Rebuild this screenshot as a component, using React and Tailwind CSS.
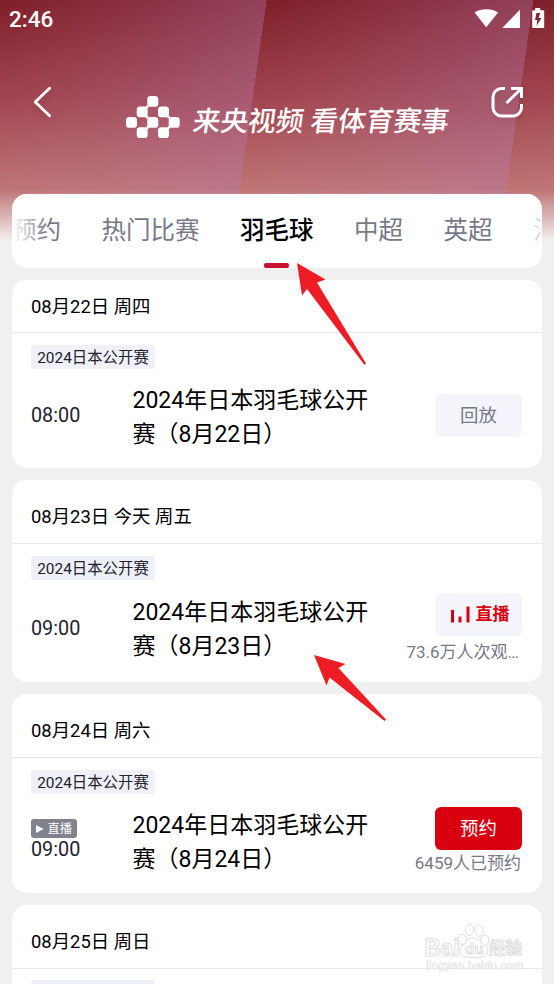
import React from "react";

const tabs = [
  { name: "预约" },
  { name: "热门比赛" },
  { name: "羽毛球", active: true },
  { name: "中超" },
  { name: "英超" },
  { name: "法甲" },
];

const days = [
  {
    date: "08月22日 周四",
    time: "08:00",
    title: "2024年日本羽毛球公开赛（8月22日）",
    status: "replay",
    cardClass: "h-[188px]",
    headClass: "h-[53px] pt-[2px]",
    bodyClass: "pt-[12px]",
    timeClass: "mt-[35.5px]",
    titleClass: "mt-[15px]",
    actionClass: "mt-[25px]",
  },
  {
    date: "08月23日 今天 周五",
    time: "09:00",
    title: "2024年日本羽毛球公开赛（8月23日）",
    status: "live",
    note: "73.6万人次观…",
    noteClass: "mt-[3px] pr-[3px]",
    cardClass: "h-[202px]",
    headClass: "h-[64px] pt-[11px]",
    bodyClass: "pt-[12px]",
    timeClass: "mt-[36.5px]",
    titleClass: "mt-[16px]",
    actionClass: "mt-[13px]",
  },
  {
    date: "08月24日 周六",
    time: "09:00",
    title: "2024年日本羽毛球公开赛（8月24日）",
    status: "book",
    note: "6459人已预约",
    noteClass: "pr-px",
    badge: true,
    cardClass: "h-[198.5px]",
    headClass: "h-[63.5px] pt-[11px]",
    bodyClass: "pt-[12px]",
    timeClass: "mt-[25.5px]",
    titleClass: "mt-[15px]",
    actionClass: "mt-[13px]",
  },
  {
    date: "08月25日 周日",
    time: "09:00",
    title: "2024年日本羽毛球公开赛（8月25日）",
    status: "book",
    cardClass: "h-[198px]",
    headClass: "h-[64px] pt-[10px]",
    bodyClass: "pt-[11px]",
    timeClass: "mt-[35px]",
    titleClass: "mt-[14px]",
    actionClass: "mt-[13px]",
  },
];

const StatusBar = () => (
  <div className="flex h-[38px] items-center justify-between pl-[9px] pr-[9px]">
    <span className="text-[22.5px] font-medium leading-none text-white">2:46</span>
    <svg width="71" height="22" viewBox="0 0 71 22" fill="white">
      <path d="M.6 4.600C7 .2 17.600.2 24 4.600L12.300 19.200Z" />
      <path d="M46 1.800V20H28.200Z" />
      <path d="M58.200 2.200h3V0h5v2.200h3a1 1 0 0 1 1 1V19a1 1 0 0 1-1 1H59.200a1 1 0 0 1-1-1V3.200a1 1 0 0 1 1-1ZM62.500 5l-1.500 7h2.300l-.8 6 5-8h-2.900l1.600-5Z" fillRule="evenodd" />
    </svg>
  </div>
);

const BrandMark = () => (
  <svg width="54" height="43" viewBox="0 0 54 43" fill="white">
    <rect x="21.300" y="0" width="11" height="10.800" rx="3.400" />
    <rect x="10.700" y="10.500" width="11" height="10.800" rx="3.400" />
    <rect x="32" y="10.500" width="11" height="10.800" rx="3.400" />
    <rect x="0" y="21" width="11" height="10.800" rx="3.400" />
    <rect x="21.300" y="21" width="11" height="10.800" rx="3.400" />
    <rect x="42.700" y="21" width="11" height="10.800" rx="3.400" />
    <rect x="10.700" y="31.300" width="11" height="10.800" rx="3.400" />
    <rect x="32" y="31.300" width="11" height="10.800" rx="3.400" />
    <path d="M20 9.500h2.500v2.500h-2.500zM20 20h2.500v2.500h-2.500zM41.500 20h2.500v2.500h-2.500zM20.300 30.300h2.500v2.500h-2.500zM41.500 30.300h2.500v2.500h-2.500z" />
  </svg>
);

const Banner = () => (
  <div className="flex h-[156px] items-start pl-[32px]">
    <svg className="mt-[48px] drop-shadow-md" width="22" height="32" viewBox="0 0 22 32" fill="none" stroke="white" strokeWidth="2.800" strokeLinecap="round" strokeLinejoin="round">
      <path d="M17.600 2.200 3.200 16l14.400 13.800" />
    </svg>
    <div className="ml-[72px] mt-[58px]">
      <BrandMark />
    </div>
    <h1 className="ml-[13px] mt-[67px] w-[284px] -skew-x-8 whitespace-nowrap text-[27.700px] font-medium leading-[34px] text-white">
      来央视频 看体育赛事
    </h1>
    <svg className="ml-[13px] mt-[48px] drop-shadow-md" width="34" height="32" viewBox="0 0 34 32" fill="none" stroke="white" strokeWidth="3">
      <path d="M15 2.500H11.500A8.500 8.500 0 0 0 3 11V21.500a8.500 8.500 0 0 0 8.500 8.500H23a8.500 8.500 0 0 0 8.500-8.500V18M21 2.500h10.500V12M31.500 2.500 16.500 17" />
    </svg>
  </div>
);

const Tabs = () => (
  <nav className="relative flex h-[73.500px] justify-start overflow-hidden rounded-[15px] bg-white">
    <div className="flex shrink-0 gap-[40.500px]">
      {tabs.map((tab) => (
        <div
          key={tab.name}
          className={
            tab.active
              ? "flex shrink-0 flex-col items-center text-[24.500px] font-medium text-black"
              : "flex shrink-0 flex-col items-center text-[24.500px] text-[#767988]"
          }
        >
          <span className="mt-[19px] leading-[36px]">{tab.name}</span>
          {tab.active && <span className="mt-[14px] h-[4.500px] w-[25px] rounded-[2px] bg-[#c8102e]" />}
        </div>
      ))}
    </div>
    <span className="absolute left-0 top-0 h-[60px] w-[36px] bg-linear-to-r from-white to-transparent" />
    <span className="absolute right-0 top-0 h-[60px] w-[20px] bg-white/75" />
  </nav>
);

const LiveBars = () => (
  <svg className="-mt-[2px]" width="19" height="17" viewBox="0 0 19 17" fill="#d9000f">
    <path d="M0 4h3v12.500H0zM7.500 10.500h3v6h-3zM15.500 0.500h3v16h-3z" />
  </svg>
);

const Action = ({ status }) => {
  if (status === "live") {
    return (
      <button className="flex h-[43px] w-[87px] items-center justify-center gap-[6px] rounded-[6px] bg-[#f4f5fa] pl-[3px] pt-px text-[17px] font-bold text-[#d9000f]">
        <LiveBars />
        直播
      </button>
    );
  }
  if (status === "book") {
    return (
      <button className="h-[43px] w-[87px] rounded-[6px] bg-[#d9000f] text-[18.400px] text-white">预约</button>
    );
  }
  return (
    <button className="h-[43px] w-[87px] rounded-[6px] bg-[#f4f5fa] pt-[2px] text-[18.400px] text-[#767988]">回放</button>
  );
};

const DayCard = ({ day }) => (
  <section className={`${day.cardClass} shrink-0 overflow-hidden rounded-[15px] bg-white`}>
    <header className={`${day.headClass} flex items-center border-b border-[#e6e6e6] pl-[19px] text-[18.400px] text-black`}>
      {day.date}
    </header>
    <div className={`${day.bodyClass} pl-[19px] pr-[20px]`}>
      <span className="flex h-[24px] w-[124px] items-center justify-center rounded-[3px] bg-[#eff1f7] pt-[3px] text-[15.400px] text-[#22222e]">
        2024日本公开赛
      </span>
      <div className="flex items-start">
        <div className={`${day.timeClass} w-[101.500px] text-[#22222e]`}>
          {day.badge && (
            <span className="flex h-[19px] w-[46px] items-center gap-[4px] rounded-[3px] bg-[#80838e] pl-[5px] pt-px text-[12.200px] text-white">
              <svg width="7.500" height="8" viewBox="0 0 7.500 8" fill="white">
                <path d="M0 0 7.500 4 0 8Z" />
              </svg>
              直播
            </span>
          )}
          <p className="text-[19.800px] leading-[24px]">{day.time}</p>
        </div>
        <h2 className={`${day.titleClass} w-[240px] text-[23px] leading-[34px] text-black`}>{day.title}</h2>
        <div className={`${day.actionClass} ml-auto flex flex-col items-end`}>
          <Action status={day.status} />
          {day.note && (
            <p className={`${day.noteClass} whitespace-nowrap text-[17px] leading-[27px] text-[#767988]`}>{day.note}</p>
          )}
        </div>
      </div>
    </div>
  </section>
);

const Arrows = () => (
  <svg className="pointer-events-none absolute left-0 top-0" width="554" height="984" viewBox="0 0 554 984" fill="#ee1c25">
    <path d="M297 263 325.500 279.500 317 282.500 366 363.500 364.500 365 307 289 302 295.500Z" />
    <path d="M314 655 345.500 664 338.500 668 386 719.500 384.500 721 329.500 677.500 326.500 685.500Z" />
  </svg>
);

const Watermark = () => (
  <svg className="pointer-events-none absolute left-[420px] top-[918px]" width="110" height="60" viewBox="0 0 110 60" fill="white" stroke="#dedede" strokeWidth="1">
    <text x="4.500" y="37.500" fontSize="23" fontFamily="Liberation Sans" fontWeight="bold" textLength="35" lengthAdjust="spacingAndGlyphs">Bai</text>
    <ellipse cx="42.500" cy="21.500" rx="4.200" ry="5.200" transform="rotate(-15 42.500 21.500)" />
    <ellipse cx="49.500" cy="12" rx="4" ry="5.800" />
    <ellipse cx="59" cy="12.500" rx="4" ry="5.800" />
    <ellipse cx="64.500" cy="22.500" rx="4.200" ry="5.500" transform="rotate(15 64.500 22.500)" />
    <path d="M53 20c-5 0-6 3-9 6.500-6 4-6 12 1 12.500 4 .5 13 .5 18 0 6-.5 6-8 1-12.500-4-3.500-6-6.500-11-6.500Z" />
    <text x="45" y="35.500" fontSize="15" fontFamily="Liberation Sans" fontWeight="bold">du</text>
    <text x="69" y="36" fontSize="16.500" fontFamily="Noto Sans CJK SC" fontWeight="bold">经验</text>
    <text x="6" y="51" fontSize="11.500" fontFamily="Liberation Sans" stroke="#e6e6e6" strokeWidth=".7" textLength="97">jingyan.baidu.com</text>
  </svg>
);

export default function App() {
  return (
    <div className="relative h-[984px] w-[554px] overflow-hidden bg-[#f0f0f0] font-[Roboto,'Noto_Sans_CJK_SC',sans-serif]">
      <div className="absolute left-0 top-0 h-[240px] w-full bg-[linear-gradient(180deg,rgba(240,240,240,0)_190px,#f3eeee_240px),repeating-linear-gradient(98.100deg,rgba(180,125,175,0)_0px,rgba(180,125,175,0.370)_264px),linear-gradient(180deg,#7f1e28_0px,#a1454e_100px,#c07573_190px)]" />
      <div className="relative">
        <StatusBar />
        <Banner />
        <main className="flex flex-col gap-[12.300px] px-[12px]">
          <Tabs />
          {days.map((day) => (
            <DayCard key={day.date} day={day} />
          ))}
        </main>
      </div>
      <Arrows />
      <Watermark />
    </div>
  );
}
